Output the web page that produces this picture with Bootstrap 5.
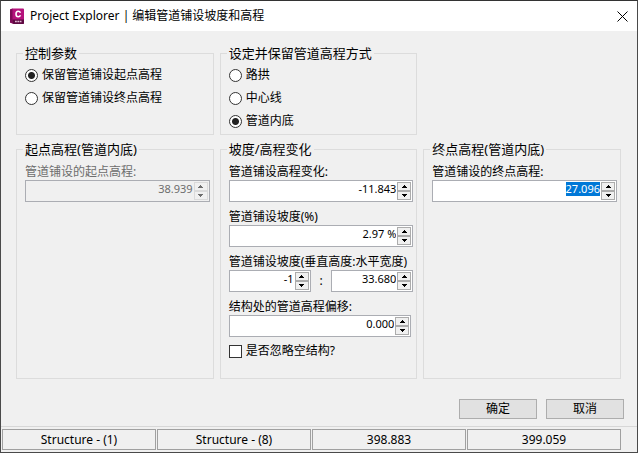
<!DOCTYPE html>
<html lang="zh-CN">
<head>
<meta charset="utf-8">
<meta name="viewport" content="width=device-width, initial-scale=1">
<title>Project Explorer | 编辑管道铺设坡度和高程</title>
<link href="https://cdn.jsdelivr.net/npm/bootstrap@5.3.0/dist/css/bootstrap.min.css" rel="stylesheet">
<style>
  body { font: 12px/18px "Noto Sans", "Noto Sans CJK SC", sans-serif; color: #000; background: #333; }
  .dialog { min-height: 100vh; background: #f0f0f0; border: 1px solid #4a4a4a; border-top-color: #333; }
  .titlebar { height: 30px; padding: 0 8px; gap: 5px; background: #fff; }
  .titlebar h1 { font-size: 12px; line-height: 18px; font-weight: 400; }
  .close-x { width: 14px; height: 14px; }
  .params { display: grid; grid-template-columns: repeat(3, minmax(0, 1fr)); grid-template-rows: auto 1fr; gap: 5px 6px; padding: 13px 16px 0 15px; }
  .group { border: 1px solid #dcdcdc; padding: 4px 3px 18px 6px; }
  .group legend { font-size: 13px; line-height: 18px; padding: 0 2px; }
  .stack { display: flex; flex-direction: column; gap: 5px; padding-left: 2px; }
  .choice { display: flex; align-items: center; gap: 4px; }
  .choice input { appearance: none; flex: none; width: 13px; height: 13px; margin: 0; background: #fff; border: 1px solid #333; }
  .choice input[type=radio] { border-radius: 50%; }
  .choice input[type=radio]:checked { background: radial-gradient(circle, #222 3px, #fff 4px); }
  .choice input[type=checkbox]:checked { background: #333; box-shadow: inset 0 0 0 2px #fff; }
  .field > label { display: block; padding-top: 2px; line-height: 16px; white-space: nowrap; }
  .field > label.dim { color: #6d6d6d; }
  .spin { display: flex; height: 22px; padding: 1px; background: #fff; border: 1px solid #abadb3; min-width: 0; }
  .spin input { flex: 1; min-width: 0; width: 0; height: 14px; padding: 0 1px; border: 0; outline: 0; background: none; color: #000; text-align: right; font-size: 11px; line-height: 14px; }
  .spin input::selection { background: #0078d7; color: #fff; }
  .arrows { flex: none; display: grid; grid-template-rows: 1fr 1fr; width: 14px; }
  .arrows button { display: flex; align-items: center; justify-content: center; padding: 0; min-height: 0; border: 1px solid #acacac; background: #f0f0f0; color: #000; }
  .arrows svg { width: 5px; height: 3px; fill: currentColor; }
  .spin.off { background: #f0f0f0; }
  .spin.off input { color: #6d6d6d; }
  .spin.off button { color: #6d6d6d; border-color: #dadada; }
  .spin-short { margin-right: 2px; }
  .slope-pair { display: grid; grid-template-columns: 82fr 21fr 82fr; align-items: center; }
  .actions { gap: 9px; padding: 20px 13px 7px; }
  .actions .btn { width: 78px; height: 20px; padding: 0; font-size: 12px; line-height: 18px; color: #000; background: #e1e1e1; border: 1px solid #adadad; border-radius: 0; }
  .statusbar { display: grid; grid-template-columns: repeat(4, 1fr); gap: 1px; padding: 2px 16px 2px 1px; border-top: 1px solid #d7d7d7; text-align: center; }
  .statusbar div { height: 21px; line-height: 19px; border: 1px solid #a0a0a0; white-space: nowrap; overflow: hidden; }
</style>
<script src="https://cdn.jsdelivr.net/npm/bootstrap@5.3.0/dist/js/bootstrap.bundle.min.js"></script>
</head>
<body>
<svg class="d-none">
  <symbol id="up" viewBox="0 0 5 3"><path d="M0 3h5v-1h-1v-1h-1v-1h-1v1h-1v1h-1z"/></symbol>
  <symbol id="down" viewBox="0 0 5 3"><path d="M0 0h5v1h-1v1h-1v1h-1v-1h-1v-1h-1z"/></symbol>
</svg>
<form class="dialog d-flex flex-column" onsubmit="return false">
  <header class="titlebar d-flex align-items-center">
    <svg width="16" height="17" viewBox="0 0 16 17" aria-hidden="true">
      <path d="M1 1.5 3.5.5h10.500q1 0 1 1V15q0 1-1 1H5L1 14.500z" fill="#b5127c"/>
      <path d="M1 1.500 3.500.500V15.500L1 14.500z" fill="#7d0b57"/>
      <path d="M3.500 11.500H15V15q0 1-1 1H5l-1.500-.5z" fill="#5e0a42"/>
      <path d="M11.500 4.700Q10.900 3.200 9.200 3.200 7 3.200 7 6t2.200 2.800q1.700 0 2.300-1.500" fill="none" stroke="#fff" stroke-width="1.600"/>
      <path d="M6 13.500h1.800m.6 0h1.700m.6 0h1.800" stroke="#e3b9d5" stroke-width="1.600"/>
    </svg>
    <h1 class="m-0 flex-grow-1 text-nowrap">Project Explorer | 编辑管道铺设坡度和高程</h1>
    <button type="button" class="close-x border-0 bg-transparent p-0 d-flex align-items-center justify-content-center" aria-label="关闭">
      <svg width="11" height="11" viewBox="0 0 11 11"><path d="M.5.5l10 10M10.500.5l-10 10" stroke="#000" fill="none"/></svg>
    </button>
  </header>

  <main class="params flex-grow-1">
    <fieldset class="group">
      <legend class="float-none w-auto m-0">控制参数</legend>
      <div class="stack">
        <label class="choice"><input type="radio" name="keep" checked>保留管道铺设起点高程</label>
        <label class="choice"><input type="radio" name="keep">保留管道铺设终点高程</label>
      </div>
    </fieldset>
    <fieldset class="group pb-1">
      <legend class="float-none w-auto m-0">设定并保留管道高程方式</legend>
      <div class="stack">
        <label class="choice"><input type="radio" name="mode">路拱</label>
        <label class="choice"><input type="radio" name="mode">中心线</label>
        <label class="choice"><input type="radio" name="mode" checked>管道内底</label>
      </div>
    </fieldset>
    <div></div>

    <fieldset class="group">
      <legend class="float-none w-auto m-0">起点高程(管道内底)</legend>
      <div class="stack">
        <div class="field">
          <label for="start" class="dim">管道铺设的起点高程:</label>
          <div class="spin off"><input id="start" type="text" value="38.939" disabled>
            <div class="arrows"><button type="button" disabled aria-label="增加"><svg><use href="#up"/></svg></button><button type="button" disabled aria-label="减少"><svg><use href="#down"/></svg></button></div></div>
        </div>
      </div>
    </fieldset>
    <fieldset class="group">
      <legend class="float-none w-auto m-0">坡度/高程变化</legend>
      <div class="stack">
        <div class="field">
          <label for="change">管道铺设高程变化:</label>
          <div class="spin"><input id="change" type="text" value="-11.843">
            <div class="arrows"><button type="button" aria-label="增加"><svg><use href="#up"/></svg></button><button type="button" aria-label="减少"><svg><use href="#down"/></svg></button></div></div>
        </div>
        <div class="field">
          <label for="slope">管道铺设坡度(%)</label>
          <div class="spin"><input id="slope" type="text" value="2.97 %">
            <div class="arrows"><button type="button" aria-label="增加"><svg><use href="#up"/></svg></button><button type="button" aria-label="减少"><svg><use href="#down"/></svg></button></div></div>
        </div>
        <div class="field">
          <label for="rise">管道铺设坡度(垂直高度:水平宽度)</label>
          <div class="slope-pair">
            <div class="spin"><input id="rise" type="text" value="-1">
              <div class="arrows"><button type="button" aria-label="增加"><svg><use href="#up"/></svg></button><button type="button" aria-label="减少"><svg><use href="#down"/></svg></button></div></div>
            <span class="text-center">:</span>
            <div class="spin"><input id="run" type="text" value="33.680" aria-label="水平宽度">
              <div class="arrows"><button type="button" aria-label="增加"><svg><use href="#up"/></svg></button><button type="button" aria-label="减少"><svg><use href="#down"/></svg></button></div></div>
          </div>
        </div>
        <div class="field">
          <label for="offset">结构处的管道高程偏移:</label>
          <div class="spin spin-short"><input id="offset" type="text" value="0.000">
            <div class="arrows"><button type="button" aria-label="增加"><svg><use href="#up"/></svg></button><button type="button" aria-label="减少"><svg><use href="#down"/></svg></button></div></div>
        </div>
        <label class="choice"><input type="checkbox">是否忽略空结构?</label>
      </div>
    </fieldset>
    <fieldset class="group">
      <legend class="float-none w-auto m-0">终点高程(管道内底)</legend>
      <div class="stack">
        <div class="field">
          <label for="end">管道铺设的终点高程:</label>
          <div class="spin"><input id="end" type="text" value="27.096">
            <div class="arrows"><button type="button" aria-label="增加"><svg><use href="#up"/></svg></button><button type="button" aria-label="减少"><svg><use href="#down"/></svg></button></div></div>
        </div>
      </div>
    </fieldset>
  </main>

  <div class="actions d-flex justify-content-end">
    <button type="submit" class="btn">确定</button>
    <button type="button" class="btn">取消</button>
  </div>
  <footer class="statusbar">
    <div>Structure - (1)</div><div>Structure - (8)</div><div>398.883</div><div>399.059</div>
  </footer>
</form>
<script>
  const endField = document.getElementById('end');
  endField.focus();
  endField.select();
</script>
</body>
</html>
